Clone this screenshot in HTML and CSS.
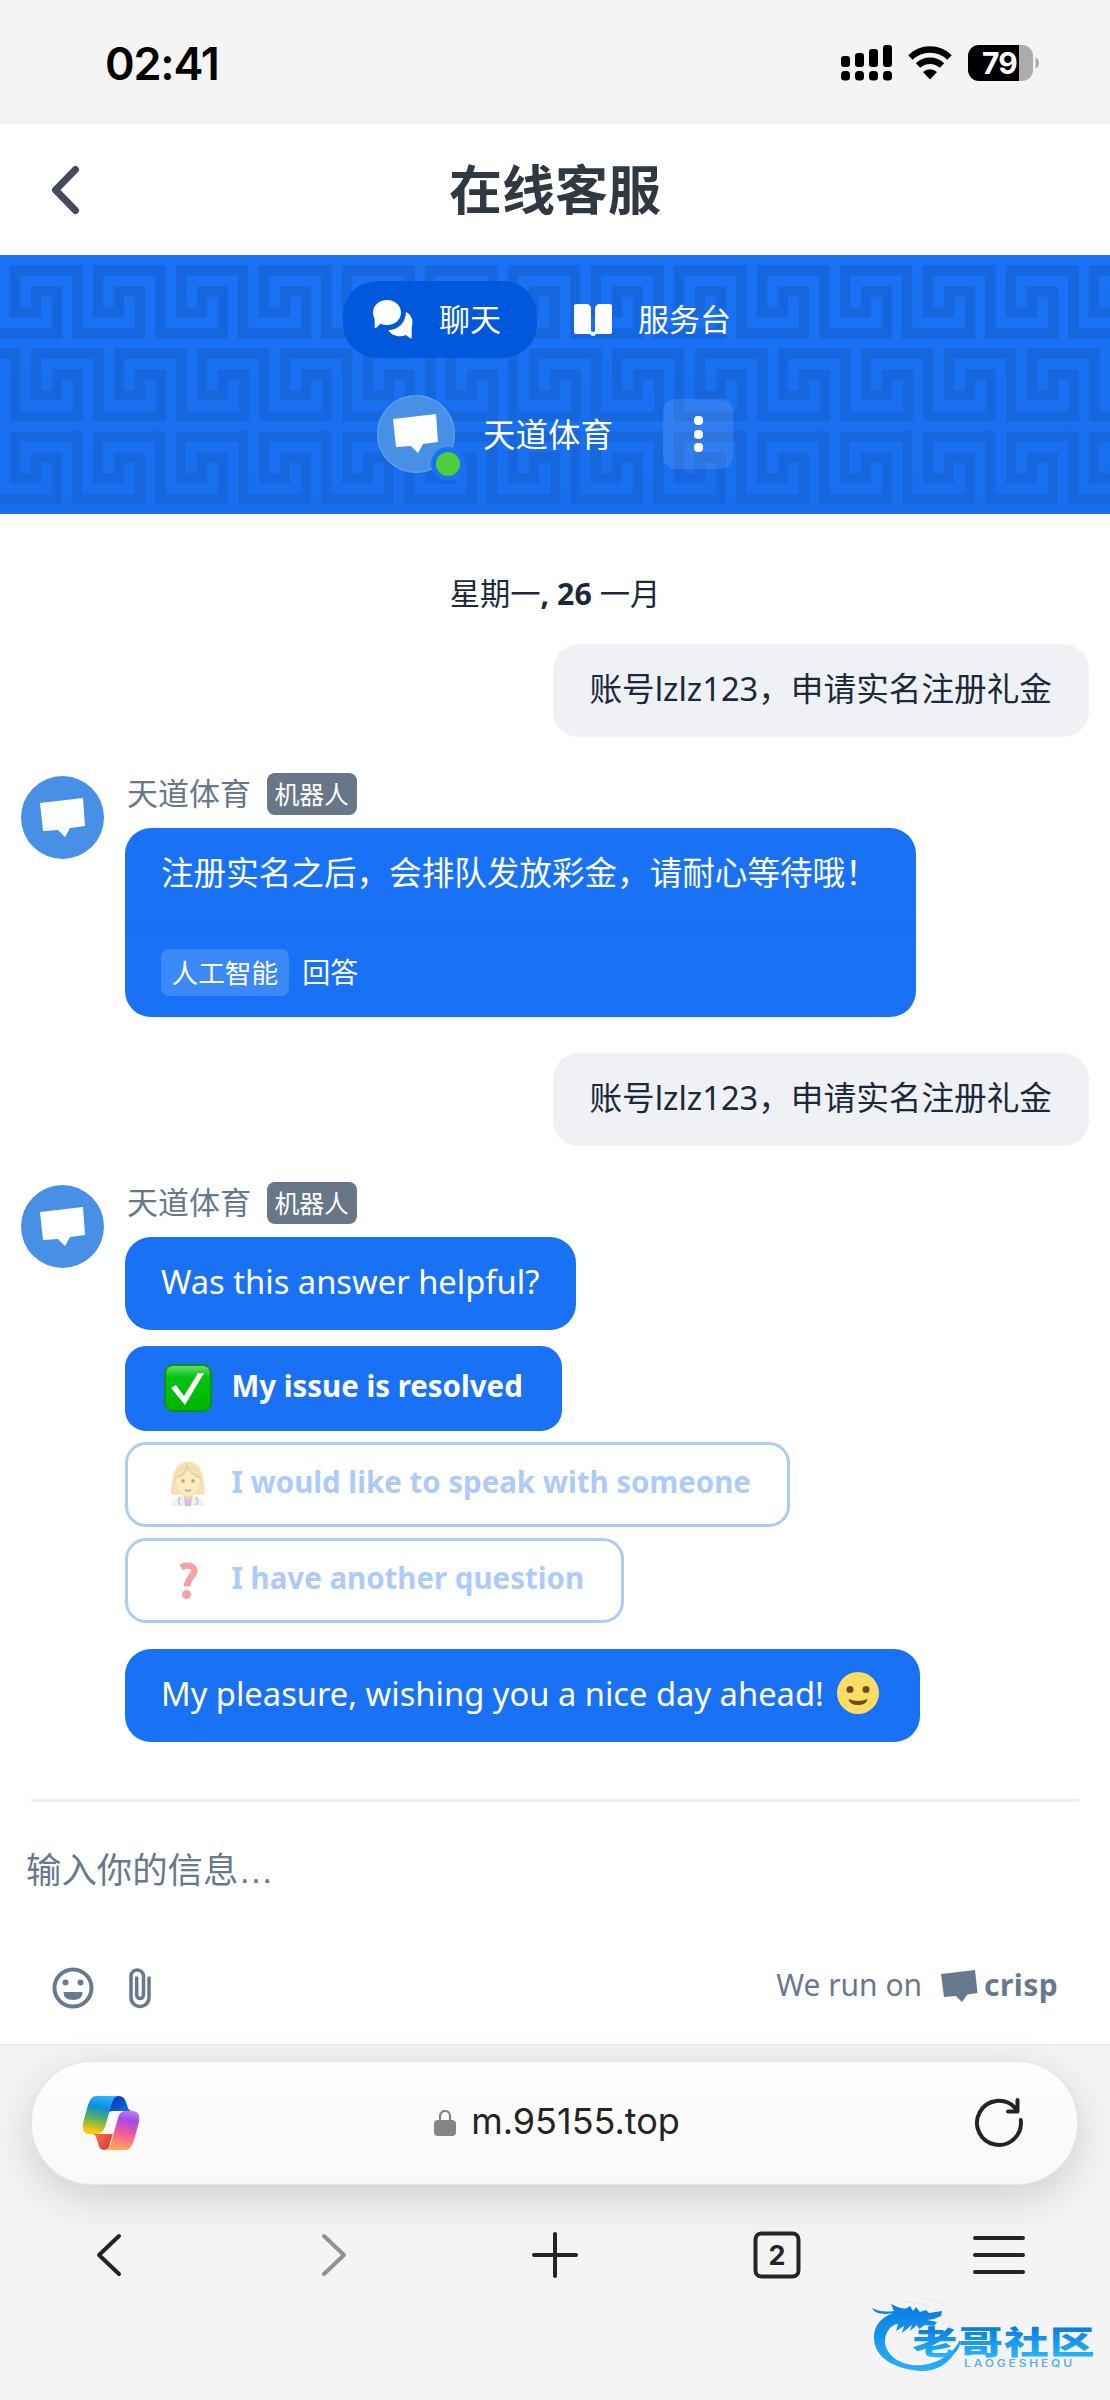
FILE: index.html
```
<!DOCTYPE html>
<html lang="zh-CN">

<head>
    <meta charset="UTF-8">
    <meta name="viewport" content="width=device-width, initial-scale=1.0">
    <title>在线客服</title>
    <link rel="stylesheet" href="styles.css">
</head>

<body>

    <header class="status">
        <span class="time">02:41</span>
        <div class="status-icons">
            <svg class="signal" width="51" height="36" viewBox="0 0 51 36">
                <rect x="0" y="11" width="9" height="11" rx="3" />
                <rect x="14" y="8" width="9" height="14" rx="3" />
                <rect x="28" y="4" width="9" height="18" rx="3" />
                <rect x="42" y="0" width="9" height="22" rx="3" />
                <rect x="0" y="26" width="9" height="9.500" rx="3.500" />
                <rect x="14" y="26" width="9" height="9.500" rx="3.500" />
                <rect x="28" y="26" width="9" height="9.500" rx="3.500" />
                <rect x="42" y="26" width="9" height="9.500" rx="3.500" />
            </svg>
            <svg class="wifi" width="44" height="34" viewBox="0 0 44 34">
                <path d="M2.500 11.500a28 28 0 0 1 39 0" fill="none" stroke="#000" stroke-width="6.500" />
                <path d="M10 19.500a17.500 17.500 0 0 1 24 0" fill="none" stroke="#000" stroke-width="6.500" />
                <path d="M15 26a10.500 10.500 0 0 1 14 0l-7 7.500z" />
            </svg>
            <svg class="battery" width="71" height="36" viewBox="0 0 71 36">
                <path d="M51 0h3a11 11 0 0 1 11 11v14a11 11 0 0 1-11 11h-3z" fill="#acacac" />
                <path d="M51 0H11A11 11 0 0 0 0 11v14a11 11 0 0 0 11 11h40z" />
                <path d="M67.500 12.500q3.500 1.500 3.500 5.500t-3.500 5.500z" fill="#acacac" />
                <text x="14" y="28.500" class="battery-text">79</text>
            </svg>
        </div>
    </header>

    <nav class="titlebar">
        <svg class="back" width="30" height="50" viewBox="0 0 30 50">
            <path d="M25.500 4.500L5.500 25l20 20.500" />
        </svg>
        <h1>在线客服</h1>
    </nav>

    <section class="hero">
        <svg class="hero-pattern" width="1110" height="259">
            <defs>
                <path id="key" d="M67 5H5V47H26V26H47V68H-15.700V5" />
                <pattern id="meander" width="83" height="166" patternUnits="userSpaceOnUse">
                    <g stroke="#1667dd" stroke-width="10.400" stroke-linecap="square">
                        <use href="#key" x="-73" y="10.500" />
                        <use href="#key" x="10" y="10.500" />
                        <use href="#key" x="93" y="10.500" />
                        <use href="#key" x="-52" y="93.500" />
                        <use href="#key" x="31" y="93.500" />
                        <use href="#key" x="114" y="93.500" />
                    </g>
                </pattern>
            </defs>
            <rect width="1110" height="259" fill="url(#meander)" />
        </svg>
        <div class="tabs">
            <div class="tab active">
                <svg width="40" height="40" viewBox="0 0 40 40">
                    <path d="M14 0c8 0 14 5.500 14 12.500S22 25 14 25c-2.500 0-4.500-.4-6.500-1.300L3 28c-1 .5-1.300 0-1.300-1V19C.6 17 0 15 0 12.500 0 5.500 6 0 14 0z" />
                    <path d="M33 12c4 2 6.500 6 6.500 10.500 0 1.500-.3 3-.8 4.500v10.500c0 1-.8 1.300-1.500.7L33 35c-2 .8-4 1.200-6 1.200-5 0-9.500-2.300-11.700-6C24 30 32.500 24 33 12z" />
                </svg>
                <span>聊天</span>
            </div>
            <div class="tab">
                <svg width="38" height="32" viewBox="0 0 38 32">
                    <path d="M2 0h10c3 0 5 2 5 5v21c0 1 1 2 2 2s2-1 2-2V5c0-3 2-5 5-5h10q2 0 2 2v26q0 2-2 2H22q-1 2-3 2t-3-2H2q-2 0-2-2V2q0-2 2-2z" />
                </svg>
                <span>服务台</span>
            </div>
        </div>
        <div class="operator">
            <div class="avatar small">
                <svg width="46" height="40" viewBox="0 0 46 40"><path d="M0 5L43 0l2 28-15 2-5 9-7-7-15 1z" /></svg>
                <i class="online"></i>
            </div>
            <span class="operator-name">天道体育</span>
            <div class="more"><i></i><i></i><i></i></div>
        </div>
    </section>

    <main class="chat">
        <p class="date">星期一<b>, 26</b> 一月</p>

        <div class="bubble visitor">账号lzlz123，申请实名注册礼金</div>

        <div class="group">
            <div class="avatar">
                <svg width="48" height="40" viewBox="0 0 46 40"><path d="M0 5L43 0l2 28-15 2-5 9-7-7-15 1z" /></svg>
            </div>
            <div class="content">
                <div class="name"><span>天道体育</span><span class="badge">机器人</span></div>
                <div class="bubble answer">
                    <p class="answer-text">注册实名之后，会排队发放彩金，请耐心等待哦！</p>
                    <p class="answer-source"><span class="tag">人工智能</span>回答</p>
                </div>
            </div>
        </div>

        <div class="bubble visitor">账号lzlz123，申请实名注册礼金</div>

        <div class="group second">
            <div class="avatar">
                <svg width="48" height="40" viewBox="0 0 46 40"><path d="M0 5L43 0l2 28-15 2-5 9-7-7-15 1z" /></svg>
            </div>
            <div class="content">
                <div class="name"><span>天道体育</span><span class="badge">机器人</span></div>
                <div class="bubble">Was this answer helpful?</div>
                <div class="choices">
                    <div class="choice picked">
                        <svg width="48" height="48" viewBox="0 0 48 48">
                            <defs>
                                <linearGradient id="green" x2="0" y2="1">
                                    <stop offset="0" stop-color="#74dc74" />
                                    <stop offset=".25" stop-color="#06c414" />
                                    <stop offset="1" stop-color="#00b300" />
                                </linearGradient>
                            </defs>
                            <rect x="1" y="1" width="46" height="46" rx="8" fill="url(#green)" stroke="#079318" stroke-width="2" />
                            <path d="M7 24l5-3 8 11L34 9h6L21 41z" fill="#fff" />
                        </svg>
                        <span>My issue is resolved</span>
                    </div>
                    <div class="choice">
                        <svg width="48" height="48" viewBox="0 0 48 48">
                            <path d="M24 2C12 2 8 12 7 34q6 2 12 0h10q6 2 12 0C40 12 36 2 24 2z" fill="#e8c15a" />
                            <path d="M7 46q1-8 12-10h10q11 2 12 10z" fill="#dcdfe2" />
                            <path d="M20 36h8l-1 10h-6z" fill="#b06cc8" />
                            <path d="M19 30h10v6l-5 4-5-4z" fill="#e8b04c" />
                            <path d="M12 19q10-3 13-11 3 7 11 11-1 16-12 17-11-1-12-17z" fill="#fbd36a" />
                            <path d="M16 37q-3 6 1 8M32 37q4 6-1 8" fill="none" stroke="#79818a" stroke-width="1.500" />
                            <circle cx="19" cy="21" r="1.800" fill="#4b3018" />
                            <circle cx="29" cy="21" r="1.800" fill="#4b3018" />
                            <path d="M21 30q3 1.500 6 0" fill="none" stroke="#a0452e" stroke-width="2" />
                            <path d="M10 18q11-1 13-12 4 9 14 12" fill="none" stroke="#b98a28" stroke-width="1.200" />
                        </svg>
                        <span>I would like to speak with someone</span>
                    </div>
                    <div class="choice">
                        <svg width="48" height="48" viewBox="0 0 48 48">
                            <path d="M17 11.500q7-4 12 0c5 6-6 10-6 19" fill="none" stroke="#e9333a" stroke-width="6.500" />
                            <circle cx="22.500" cy="38.500" r="4.500" fill="#e9333a" />
                        </svg>
                        <span>I have another question</span>
                    </div>
                </div>
                <div class="bubble">My pleasure, wishing you a nice day ahead!
                    <svg class="smile" width="42" height="42" viewBox="0 0 42 42">
                        <circle cx="21" cy="21" r="21" fill="#ffdc64" />
                        <circle cx="13" cy="17.500" r="3.500" fill="#664e27" />
                        <circle cx="29" cy="17.500" r="3.500" fill="#664e27" />
                        <path d="M11.500 27q9.500 4 19 0-1 6-9.500 6t-9.500-6z" fill="#664e27" />
                    </svg>
                </div>
            </div>
        </div>
    </main>

    <footer class="composer">
        <p class="placeholder">输入你的信息<span>…</span></p>
        <div class="tools">
            <svg width="42" height="42" viewBox="0 0 42 42">
                <circle cx="21" cy="21" r="18.500" fill="none" stroke="#67798e" stroke-width="4" />
                <circle cx="13.500" cy="15.500" r="3" />
                <circle cx="28.500" cy="15.500" r="3" />
                <path d="M11.500 25h19q0 8-9.500 8t-9.500-8z" />
            </svg>
            <svg width="22" height="42" viewBox="0 0 22 42">
                <path d="M20 11v19.500a9 9 0 0 1-18 0V8.500a6.300 6.300 0 0 1 12.500 0V28a3.400 3.400 0 0 1-6.800 0V11" fill="none" stroke="#67798e" stroke-width="3.500" stroke-linecap="round" />
            </svg>
            <span class="powered">We run on</span>
            <svg class="crisp-mark" width="37" height="33" viewBox="0 0 37 33"><path d="M0 4L34 0l2.500 23-10 1.500L21 32l-6-6-12 1z" /></svg>
            <b class="crisp">crisp</b>
        </div>
    </footer>

    <div class="browser">
        <div class="address">
            <svg width="58" height="54" viewBox="0 0 58 54">
                <defs>
                    <linearGradient id="cp1" x1=".6" x2=".4" y2="1">
                        <stop offset="0" stop-color="#2fb6fa" />
                        <stop offset=".3" stop-color="#0d8ddd" />
                        <stop offset=".62" stop-color="#5bb45c" />
                        <stop offset=".95" stop-color="#fbc802" />
                    </linearGradient>
                    <linearGradient id="cp2" x1=".6" x2=".4" y2="1">
                        <stop offset="0" stop-color="#b57cf0" />
                        <stop offset=".2" stop-color="#a34bea" />
                        <stop offset=".55" stop-color="#f2589a" />
                        <stop offset="1" stop-color="#ffae50" />
                    </linearGradient>
                    <linearGradient id="cp3" y2="1">
                        <stop offset="0" stop-color="#0b2bb0" />
                        <stop offset="1" stop-color="#1279e8" />
                    </linearGradient>
                    <linearGradient id="cp4" y2=".6">
                        <stop offset="0" stop-color="#ff7c43" />
                        <stop offset="1" stop-color="#d83a45" />
                    </linearGradient>
                </defs>
                <path d="M27 16L31 0h6q5 0 7 6l2 6q1 3 5 3H30z" fill="url(#cp3)" />
                <path d="M31 37l-5 17h-4q-5 0-6-7l-2-6q-1-3-4-3h20z" fill="url(#cp4)" />
                <path d="M14 0h23q-5 0-7 7l-7 24q-2 7-9 7H8q-9 0-7-11L6 9q3-9 8-9z" fill="url(#cp1)" />
                <path d="M43 15h7q9 0 7 11l-5 18q-3 10-9 10H21q6 0 8-7l7-25q2-7 7-7z" fill="url(#cp2)" />
            </svg>
            <div class="url">
                <svg width="22" height="26" viewBox="0 0 22 26">
                    <rect y="10" width="22" height="16" rx="4" fill="#868686" />
                    <path d="M6 12V6a5 5 0 0 1 10 0v6" fill="none" stroke="#868686" stroke-width="2.200" />
                </svg>
                <span>m.95155.top</span>
            </div>
            <svg class="line" width="50" height="50" viewBox="0 0 50 50">
                <path d="M46.800 22A22 22 0 1 1 41 9.800M43.500 2v11.500H34" />
            </svg>
        </div>
        <div class="toolbar">
            <svg class="line" width="52" height="50" viewBox="0 0 52 50"><path d="M36 6L16 25l20 19" /></svg>
            <svg class="line faded" width="52" height="50" viewBox="0 0 52 50"><path d="M18 6l20 19-20 19" /></svg>
            <svg class="line" width="52" height="50" viewBox="0 0 52 50"><path d="M27 4v42M6 25h42" /></svg>
            <svg class="line" width="52" height="50" viewBox="0 0 52 50">
                <rect x="4.500" y="3.500" width="43" height="43" rx="6" />
                <text x="26" y="34.500" class="tab-count">2</text>
            </svg>
            <svg class="line" width="52" height="50" viewBox="0 0 52 50"><path d="M2 8h48M2 25h48M2 42h48" /></svg>
        </div>
        <svg class="watermark" width="226" height="80" viewBox="0 0 226 80">
            <defs>
                <linearGradient id="wm" gradientUnits="userSpaceOnUse" x1="0" y1="8" x2="0" y2="72">
                    <stop offset="0" stop-color="#0a7fe2" />
                    <stop offset="1" stop-color="#27b0fb" />
                </linearGradient>
                <linearGradient id="wt" gradientUnits="userSpaceOnUse" x1="0" y1="28" x2="0" y2="56">
                    <stop offset="0" stop-color="#0a7ddd" />
                    <stop offset="1" stop-color="#27b0fb" />
                </linearGradient>
            </defs>
            <path d="M0 9q9 5 22 3l-3-7q12 6 16 4l3-2 3 5 3-4 4 5 6-2 3 3 13-2-1 5-7 3-7 1 10 2-3 4-9-1-6 4-2-4-7 6 2-6-10 8 2-7-8 5 2-7C20 25 12 33 13 44c2 14 18 24 37 22 17-2 31-11 38-25q1 7-6 14C73 68 60 73 48 72 24 70 4 60 2 41 1 28 8 19 21 14 12 16 3 15 0 9z" fill="url(#wm)" />
            <path d="M28 3q16-1 30 5M46 0q18-1 26 8" fill="none" stroke="#dde9f2" stroke-width="1" />
            <text x="29" y="55.500" class="wm-title" fill="url(#wt)" textLength="130" lengthAdjust="spacing" transform="scale(1.400 1)">老哥社区</text>
            <text x="76.700" y="68.500" class="wm-sub" textLength="90" lengthAdjust="spacing" transform="scale(1.200 1)">LAOGESHEQU</text>
        </svg>
    </div>

</body>

</html>
```
FILE: styles.css
```
* {
    box-sizing: border-box;
    margin: 0;
    padding: 0;
}

body {
    width: 1110px;
    height: 2400px;
    overflow: hidden;
    display: flex;
    flex-direction: column;
    background-color: #fff;
    font-family: "Noto Sans", "Noto Sans CJK SC", sans-serif;
}

svg {
    display: block;
    flex: none;
}

/* status bar */
.status {
    height: 124px;
    background-color: #f4f4f4;
    display: flex;
    align-items: center;
    justify-content: space-between;
    padding: 2px 71px 0 105px;
}

.time {
    font: 600 45px Inter, sans-serif;
    letter-spacing: -1.2px;
}

.status-icons {
    display: flex;
    align-items: center;
    gap: 16px;
}

.battery-text {
    font: 700 30px Inter, sans-serif;
    letter-spacing: -1px;
    fill: #fff;
}

/* title */
.titlebar {
    height: 131px;
    display: grid;
    grid-template-columns: 100px 1fr 100px;
    align-items: center;
    text-align: center;
}

.back {
    margin-left: 50px;
    fill: none;
    stroke: #454a5c;
    stroke-width: 7;
    stroke-linecap: round;
    stroke-linejoin: round;
}

h1 {
    font-size: 53px;
    line-height: 60px;
    color: #303841;
}

/* blue header */
.hero {
    height: 259px;
    position: relative;
    background: linear-gradient(#1972f5, #186fee);
    color: #fff;
    padding-top: 26px;
}

.hero-pattern {
    position: absolute;
    top: 0;
    left: 0;
}

.hero svg path {
    fill: #fff;
}

.hero #key {
    fill: none;
}

.tabs {
    position: relative;
    display: flex;
    margin-left: 343px;
    font-size: 31px;
}

.tab {
    height: 77px;
    display: flex;
    align-items: center;
    gap: 26px;
    padding: 0 37px;
    border-radius: 34px;
}

.tab span {
    margin-top: -4px;
}

.tab.active {
    width: 194px;
    padding: 0 30px;
    background-color: #0059dc;
}

.operator {
    position: relative;
    display: flex;
    align-items: center;
    margin: 37px 0 0 377px;
}

.operator-name {
    font-size: 32.5px;
    margin: -2px 50px 0 28px;
}

.avatar {
    width: 83px;
    height: 83px;
    border-radius: 50%;
    background-color: #4890e6;
    display: flex;
    align-items: center;
    justify-content: center;
    flex: none;
    fill: #fff;
}

.avatar.small {
    position: relative;
    width: 78px;
    height: 78px;
    box-shadow: inset 0 0 0 1px #67a3ea;
}

.online {
    position: absolute;
    right: -10px;
    bottom: -8px;
    width: 34px;
    height: 34px;
    border-radius: 50%;
    border: 5px solid #1972f5;
    background-color: #4fce3d;
}

.more {
    width: 70px;
    height: 70px;
    border-radius: 12px;
    background-color: rgba(255, 255, 255, .1);
    display: flex;
    flex-direction: column;
    align-items: center;
    justify-content: center;
    gap: 4.5px;
}

.more i {
    width: 9px;
    height: 9px;
    border-radius: 4px;
    background-color: #fff;
}

/* messages */
.chat {
    height: 1285px;
    padding: 64px 21px 0;
    display: flex;
    flex-direction: column;
    color: #1c293b;
}

.date {
    font-size: 30.3px;
    line-height: 32px;
    text-align: center;
    margin-bottom: 34px;
}

.bubble {
    height: 93px;
    width: fit-content;
    padding: 0 37px 0 36.5px;
    border-radius: 26px;
    background-color: #1972f5;
    color: #fff;
    font-size: 32.7px;
    line-height: 90px;
    white-space: nowrap;
}

.visitor {
    align-self: flex-end;
    background-color: #f0f1f5;
    color: #1c293b;
    font-size: 32.65px;
}

.group {
    display: flex;
    gap: 20.5px;
    margin: 36px 0;
}

.group.second {
    margin: 36px 0 0;
}

.group .avatar {
    margin-top: 3px;
}

.name {
    height: 42px;
    display: flex;
    align-items: center;
    gap: 15.5px;
    padding-left: 2.5px;
    margin-bottom: 12.5px;
    font-size: 31px;
    line-height: 40px;
    color: #67788c;
}

.name span:first-child {
    margin-top: -2px;
}

.badge {
    padding: 0 8px;
    border-radius: 8px;
    background-color: #677788;
    color: #fff;
    font-size: 24.8px;
    line-height: 42px;
}

.answer {
    width: 791px;
    height: 189.5px;
    padding: 0;
    font-size: 32.6px;
}

.answer-text {
    height: 101px;
    padding: 0 36.5px;
    border-bottom: 2px solid #186aea;
}

.answer-source {
    display: flex;
    align-items: center;
    gap: 13px;
    padding: 20px 36px;
    font-size: 28px;
    line-height: 47px;
}

.tag {
    padding: 0 11px;
    border-radius: 8px;
    background-color: #3b88f7;
    font-size: 26.7px;
}

.choices {
    display: flex;
    flex-direction: column;
    align-items: flex-start;
    gap: 11px;
    margin: 16px 0 26px;
}

.choice {
    height: 85px;
    display: flex;
    align-items: center;
    gap: 20px;
    padding: 0 36.5px 0 36px;
    border: 3px solid #accbfb;
    border-radius: 21px;
    color: #accbfb;
    font-size: 29.45px;
    font-weight: bold;
}

.choice span {
    margin-top: -3.5px;
}

.choice svg {
    margin-top: -1px;
    opacity: .45;
}

.choice.picked {
    border-color: #1972f5;
    background-color: #1972f5;
    color: #fff;
}

.picked svg {
    opacity: 1;
}

.smile {
    display: inline-block;
    vertical-align: -8px;
    margin: 0 4px 0 5px;
}

/* composer */
.composer {
    height: 245px;
    margin: 0 31px;
    border-top: 3px solid #e9eef2;
    color: #67798e;
    fill: #67798e;
}

.placeholder {
    height: 50px;
    margin: 43px 0 0 -5px;
    font-size: 35.4px;
    line-height: 49px;
}

.placeholder span {
    font-family: "Liberation Sans", sans-serif;
}

.tools {
    display: flex;
    align-items: center;
    margin: 72px 21px 0 21px;
}

.tools svg + svg {
    margin-left: 35px;
}

.powered {
    margin-left: auto;
    font-size: 30px;
    line-height: 42px;
    margin-top: -6px;
}

.tools .crisp-mark {
    margin: -4px 6px 0 19px;
}

.crisp {
    font-size: 30px;
    line-height: 42px;
    margin-top: -6px;
    letter-spacing: .4px;
}

/* browser chrome */
.browser {
    height: 356px;
    padding-top: 17px;
    border-top: 1px solid #eaeaea;
    background-color: #f4f4f5;
}

.address {
    height: 122px;
    margin: 0 33px 0 32px;
    padding: 0 53px 0 50px;
    border-radius: 60px;
    background: linear-gradient(#fdfdfd, #f9f9f9);
    box-shadow: 0 0 0 1px #e6e6e6, 0 12px 45px rgba(0, 0, 0, .16);
    display: flex;
    align-items: center;
    justify-content: space-between;
}

.url {
    display: flex;
    align-items: center;
    gap: 15px;
    font: 36px Inter, sans-serif;
    color: #242424;
}

.url span {
    margin-top: -4px;
}

.line {
    fill: none;
    stroke: #242424;
    stroke-width: 4;
    stroke-linecap: round;
    stroke-linejoin: round;
}

.faded {
    stroke: #929292;
}

.toolbar {
    display: flex;
    justify-content: space-between;
    padding: 0 85px 0 83px;
    margin-top: 46px;
}

.tab-count {
    font: 700 27px Inter, sans-serif;
    text-anchor: middle;
    fill: #242424;
    stroke: none;
}

.watermark {
    margin: 19px 0 0 872px;
}

.wm-title {
    font: 900 32px "Noto Sans CJK SC", sans-serif;
}

.wm-sub {
    font: 600 10px Inter, sans-serif;
    fill: #5cb0ee;
}
```
